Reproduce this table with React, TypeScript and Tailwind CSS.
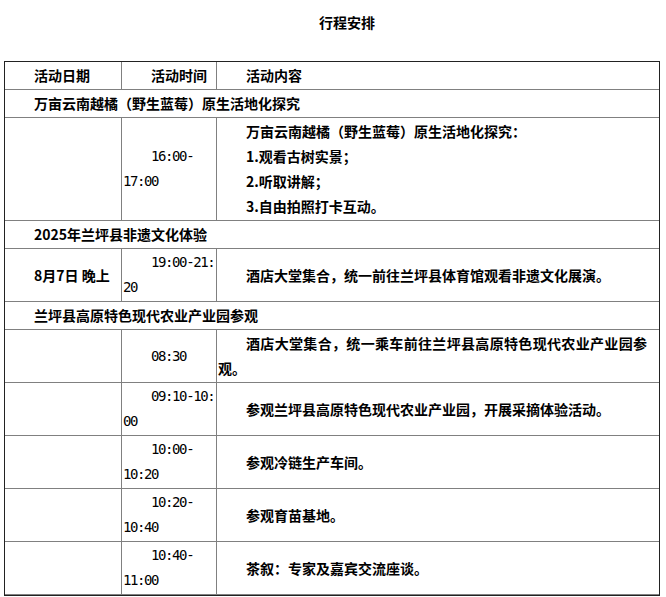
import React from "react";

type Row =
  | { kind: "section"; title: string }
  | { kind: "item"; date?: string; time: string[]; lines: string[] };

const rows: Row[] = [
  { kind: "section", title: "万亩云南越橘（野生蓝莓）原生活地化探究" },
  {
    kind: "item",
    time: ["16:00-", "17:00"],
    lines: [
      "万亩云南越橘（野生蓝莓）原生活地化探究：",
      "1.观看古树实景；",
      "2.听取讲解；",
      "3.自由拍照打卡互动。",
    ],
  },
  { kind: "section", title: "2025年兰坪县非遗文化体验" },
  {
    kind: "item",
    date: "8月7日 晚上",
    time: ["19:00-21:", "20"],
    lines: ["酒店大堂集合，统一前往兰坪县体育馆观看非遗文化展演。"],
  },
  { kind: "section", title: "兰坪县高原特色现代农业产业园参观" },
  {
    kind: "item",
    time: ["08:30"],
    lines: ["酒店大堂集合，统一乘车前往兰坪县高原特色现代农业产业园参观。"],
  },
  {
    kind: "item",
    time: ["09:10-10:", "00"],
    lines: ["参观兰坪县高原特色现代农业产业园，开展采摘体验活动。"],
  },
  { kind: "item", time: ["10:00-", "10:20"], lines: ["参观冷链生产车间。"] },
  { kind: "item", time: ["10:20-", "10:40"], lines: ["参观育苗基地。"] },
  { kind: "item", time: ["10:40-", "11:00"], lines: ["茶叙：专家及嘉宾交流座谈。"] },
];

// shared cell look
const cell = "flex flex-col justify-center px-px py-px";
const sideCell = `${cell} border-r border-[#808080]`;

const TimeText: React.FC<{ parts: string[] }> = ({ parts }) => (
  <div className="indent-[28px] font-['DejaVu_Sans_Mono',monospace] font-normal tracking-[-1.4px]">
    {parts.map((p, i) => (
      <React.Fragment key={i}>
        {i > 0 && <br />}
        {p}
      </React.Fragment>
    ))}
  </div>
);

const App: React.FC = () => {
  return (
    <div className="min-h-[597px] bg-white pt-[10px] font-['Noto_Sans_CJK_SC',sans-serif] text-[14px] font-bold leading-[25px] text-black">
      <p className="mb-[26px] text-center indent-[28px]">行程安排</p>

      <div className="ml-[4px] w-[656px] border border-[#222]">
        {/* header */}
        <div className="grid grid-cols-[117px_95px_1fr] border-b border-[#808080]">
          <div className={sideCell}>
            <p className="indent-[28px]">活动日期</p>
          </div>
          <div className={sideCell}>
            <p className="indent-[28px]">活动时间</p>
          </div>
          <div className={`${cell} pr-[12px]`}>
            <p className="indent-[28px]">活动内容</p>
          </div>
        </div>

        {rows.map((row, idx) =>
          row.kind === "section" ? (
            <div key={idx} className="border-b border-[#808080] px-px py-px">
              <p className="indent-[28px]">{row.title}</p>
            </div>
          ) : (
            <div
              key={idx}
              className="grid grid-cols-[117px_95px_1fr] border-b border-[#808080]"
            >
              <div className={sideCell}>
                {row.date && <p className="indent-[28px]">{row.date}</p>}
              </div>
              <div className={sideCell}>
                <TimeText parts={row.time} />
              </div>
              <div className={`${cell} pr-[12px] text-justify`}>
                {row.lines.map((line, i) => (
                  <p key={i} className="indent-[28px]">
                    {line}
                  </p>
                ))}
              </div>
            </div>
          )
        )}
      </div>
    </div>
  );
};

export default App;
